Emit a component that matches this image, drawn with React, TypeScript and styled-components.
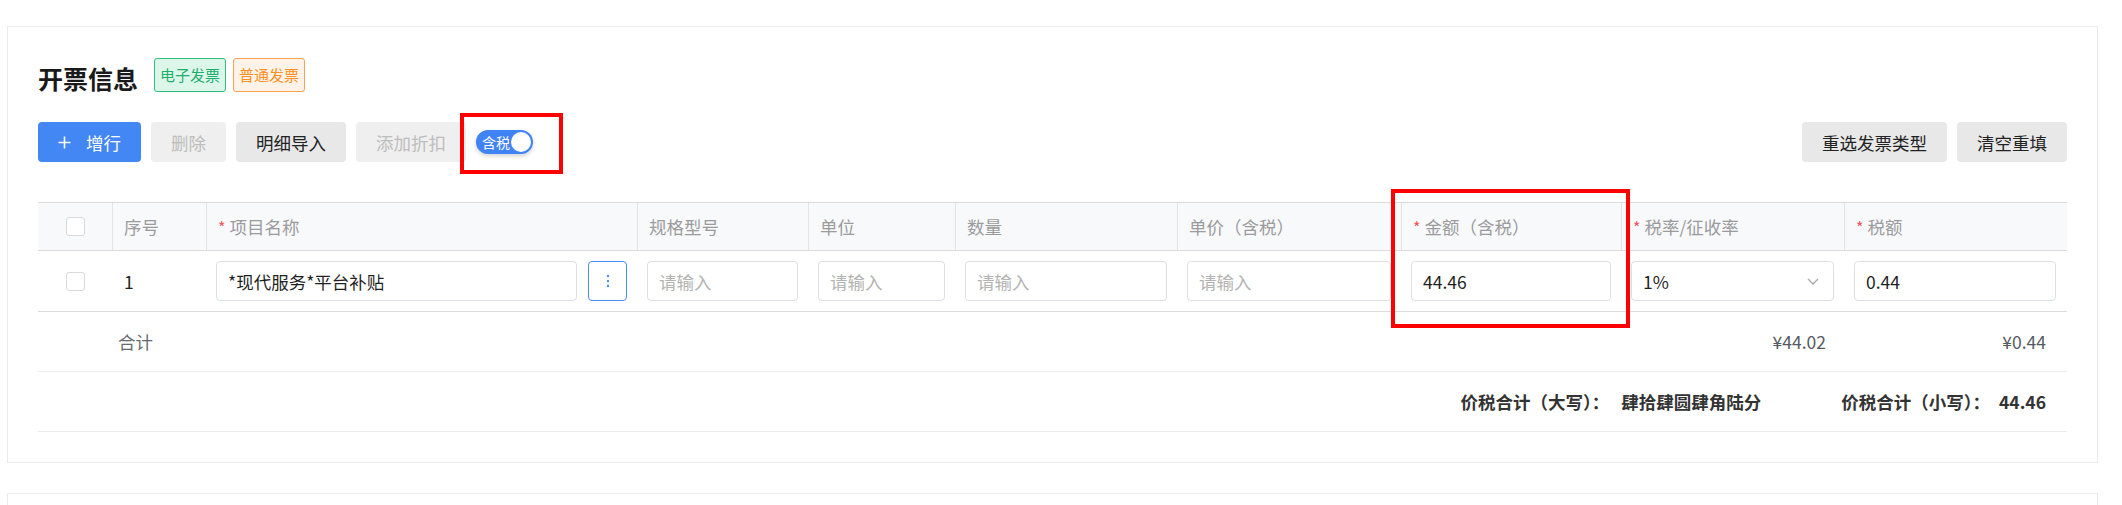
import React, { type FC } from 'react';
import styled, { createGlobalStyle, css } from 'styled-components';

const GlobalStyle = createGlobalStyle`
  * {
    box-sizing: border-box;
  }

  body {
    margin: 0;
    background: #ffffff;
    font-family: 'Noto Sans CJK SC', 'Noto Sans', sans-serif;
    font-size: 17.5px;
    color: #222222;
  }
`;

const COLUMNS = '74px 94px 431px 171px 147px 222px 224px 220px 223px 222px';

const Page = styled.div`
  display: flex;
  flex-direction: column;
  gap: 30px;
  padding: 26px 24px 0 7px;
`;

const Card = styled.section<{ $empty?: boolean }>`
  border: 1px solid #ebebeb;
  background: #ffffff;
  padding: ${({ $empty }) => ($empty ? '0' : '31px 30px 30px')};
  min-height: ${({ $empty }) => ($empty ? '80px' : 'auto')};
`;

const TitleRow = styled.div`
  display: flex;
  align-items: flex-end;
  gap: 16px;
  height: 34px;
`;

const Title = styled.h2`
  margin: 0 0 1px;
  font-size: 25px;
  line-height: 1;
  font-weight: 700;
  color: #1a1a1a;
`;

const TagGroup = styled.div`
  display: flex;
  gap: 7px;
`;

const Tag = styled.span<{ $tone: 'green' | 'orange' }>`
  height: 34px;
  padding: 0 5px;
  border-radius: 3px;
  font-size: 15px;
  line-height: 32px;
  ${({ $tone }) =>
    $tone === 'green'
      ? css`
          border: 1px solid #2dbd7e;
          background: #dcf7ea;
          color: #1cae6a;
        `
      : css`
          border: 1px solid #ffa24d;
          background: #fff3e9;
          color: #ff9124;
        `}
`;

const Toolbar = styled.div`
  display: flex;
  justify-content: space-between;
  align-items: center;
  margin-top: 30px;
`;

const ButtonGroup = styled.div`
  display: flex;
  align-items: center;
  gap: 10px;
`;

const Button = styled.button<{ $variant?: 'primary' | 'default' | 'disabled' }>`
  display: inline-flex;
  align-items: center;
  gap: 15px;
  height: 40px;
  padding: 0 20px;
  border: none;
  border-radius: 4px;
  font-family: inherit;
  font-size: 17.5px;
  cursor: pointer;
  ${({ $variant = 'default' }) => {
    if ($variant === 'primary') {
      return css`
        background: #4387f5;
        color: #ffffff;
      `;
    }
    if ($variant === 'disabled') {
      return css`
        background: #efefef;
        color: #bdbdbd;
        cursor: not-allowed;
      `;
    }
    return css`
      background: #e8e8e8;
      color: #222222;
    `;
  }}
`;

// red annotation frame drawn over the switch
const Marked = styled.span`
  position: relative;
  display: inline-flex;

  &::after {
    content: '';
    position: absolute;
    top: -17px;
    left: -16px;
    right: -30px;
    bottom: -20px;
    border: 4px solid #ff0000;
    pointer-events: none;
  }
`;

const Switch = styled.span`
  display: flex;
  align-items: center;
  justify-content: space-between;
  width: 57px;
  height: 24px;
  padding: 0 2px 0 6px;
  border-radius: 12px;
  background: #3f83f4;
  box-shadow: 0 2px 4px rgba(0, 0, 0, 0.18);
  color: #ffffff;
  font-size: 14px;
  line-height: 24px;
`;

const Knob = styled.span`
  width: 20px;
  height: 20px;
  border-radius: 50%;
  background: #ffffff;
`;

const Table = styled.div`
  margin-top: 40px;
`;

const HeaderRow = styled.div`
  display: grid;
  grid-template-columns: ${COLUMNS};
  height: 49px;
  border-top: 1px solid #dcdcdc;
  border-bottom: 1px solid #dcdcdc;
  background: #f8f9fb;
`;

const HeaderCell = styled.div<{ $first?: boolean; $marked?: boolean }>`
  position: relative;
  display: flex;
  align-items: center;
  justify-content: ${({ $first }) => ($first ? 'center' : 'flex-start')};
  padding: 0 11px;
  border-left: ${({ $first }) => ($first ? 'none' : '1px solid #e3e3e3')};
  color: #9b9b9b;
  white-space: nowrap;

  ${({ $marked }) =>
    $marked &&
    css`
      &::after {
        content: '';
        position: absolute;
        top: -14px;
        left: -11px;
        right: -9px;
        bottom: -78px;
        border: 4px solid #ff0000;
        pointer-events: none;
        z-index: 2;
      }
    `}
`;

const Required = styled.span`
  margin-right: 4px;
  color: #f0545c;
  font-size: 16px;
`;

const BodyRow = styled.div<{ $line?: string; $height: number }>`
  display: grid;
  grid-template-columns: ${COLUMNS};
  height: ${({ $height }) => `${$height}px`};
  border-bottom: 1px solid ${({ $line }) => $line || '#dcdcdc'};
`;

const Cell = styled.div<{ $align?: 'center' | 'right' | 'left'; $pad?: string }>`
  display: flex;
  align-items: center;
  gap: 11px;
  justify-content: ${({ $align }) =>
    $align === 'center' ? 'center' : $align === 'right' ? 'flex-end' : 'flex-start'};
  padding: ${({ $pad }) => $pad || '0 10px'};
  min-width: 0;
`;

const Checkbox = styled.span`
  width: 19px;
  height: 19px;
  border: 1px solid #d9d9d9;
  border-radius: 3px;
  background: #ffffff;
`;

const Input = styled.input`
  flex: 1;
  width: 100%;
  min-width: 0;
  height: 40px;
  padding: 0 11px;
  border: 1px solid #dcdfe4;
  border-radius: 4px;
  outline: none;
  background: #ffffff;
  font-family: inherit;
  font-size: 17.5px;
  color: #1f1f1f;

  &::placeholder {
    color: #b3b3b3;
  }
`;

const MoreButton = styled.button`
  display: flex;
  align-items: center;
  justify-content: center;
  flex: none;
  width: 39px;
  height: 40px;
  padding: 0;
  border: 1px solid #4a8cf6;
  border-radius: 4px;
  background: #ffffff;
  cursor: pointer;
`;

const Select = styled.div`
  display: flex;
  align-items: center;
  justify-content: space-between;
  width: 100%;
  height: 40px;
  padding: 0 14px 0 11px;
  border: 1px solid #dcdfe4;
  border-radius: 4px;
  color: #1f1f1f;
`;

const SumText = styled.span<{ $muted?: boolean }>`
  color: ${({ $muted }) => ($muted ? '#666a70' : '#555a61')};
`;

const TotalsRow = styled.div`
  display: flex;
  justify-content: flex-end;
  align-items: center;
  gap: 80px;
  height: 60px;
  padding-right: 21px;
  border-bottom: 1px solid #ececec;
  font-weight: 700;
  color: #333333;
`;

const TotalGroup = styled.div<{ $gap: number }>`
  display: flex;
  align-items: center;
  gap: ${({ $gap }) => `${$gap}px`};
`;

const PlusIcon: FC = () => (
  <svg width="13" height="13" viewBox="0 0 13 13">
    <path d="M6.5 0.5v12M0.5 6.5h12" stroke="#ffffff" strokeWidth="1.6" />
  </svg>
);

const DotsIcon: FC = () => (
  <svg width="4" height="14" viewBox="0 0 4 14">
    <circle cx="2" cy="2" r="1.2" fill="#4a8cf6" />
    <circle cx="2" cy="7" r="1.2" fill="#4a8cf6" />
    <circle cx="2" cy="12" r="1.2" fill="#4a8cf6" />
  </svg>
);

const ChevronIcon: FC = () => (
  <svg width="12" height="7" viewBox="0 0 12 7">
    <path d="M1 1l5 5 5-5" fill="none" stroke="#a8a8a8" strokeWidth="1.3" />
  </svg>
);

interface Column {
  label: string;
  required?: boolean;
  marked?: boolean;
}

const columns: Column[] = [
  { label: '序号' },
  { label: '项目名称', required: true },
  { label: '规格型号' },
  { label: '单位' },
  { label: '数量' },
  { label: '单价（含税）' },
  { label: '金额（含税）', required: true, marked: true },
  { label: '税率/征收率', required: true },
  { label: '税额', required: true },
];

const App: FC = () => (
  <>
    <GlobalStyle />
    <Page>
      <Card>
        <TitleRow>
          <Title>开票信息</Title>
          <TagGroup>
            <Tag $tone="green">电子发票</Tag>
            <Tag $tone="orange">普通发票</Tag>
          </TagGroup>
        </TitleRow>

        <Toolbar>
          <ButtonGroup>
            <Button $variant="primary">
              <PlusIcon />
              增行
            </Button>
            <Button $variant="disabled">删除</Button>
            <Button>明细导入</Button>
            <Button $variant="disabled">添加折扣</Button>
            <Marked>
              <Switch>
                含税
                <Knob />
              </Switch>
            </Marked>
          </ButtonGroup>
          <ButtonGroup>
            <Button>重选发票类型</Button>
            <Button>清空重填</Button>
          </ButtonGroup>
        </Toolbar>

        <Table>
          <HeaderRow>
            <HeaderCell $first>
              <Checkbox />
            </HeaderCell>
            {columns.map(col => (
              <HeaderCell key={col.label} $marked={col.marked}>
                {col.required && <Required>*</Required>}
                {col.label}
              </HeaderCell>
            ))}
          </HeaderRow>

          <BodyRow $height={61}>
            <Cell $align="center" $pad="0">
              <Checkbox />
            </Cell>
            <Cell $pad="0 12px">1</Cell>
            <Cell>
              <Input defaultValue="*现代服务*平台补贴" />
              <MoreButton>
                <DotsIcon />
              </MoreButton>
            </Cell>
            <Cell>
              <Input placeholder="请输入" />
            </Cell>
            <Cell>
              <Input placeholder="请输入" />
            </Cell>
            <Cell>
              <Input placeholder="请输入" />
            </Cell>
            <Cell>
              <Input placeholder="请输入" />
            </Cell>
            <Cell>
              <Input defaultValue="44.46" />
            </Cell>
            <Cell>
              <Select>
                1%
                <ChevronIcon />
              </Select>
            </Cell>
            <Cell>
              <Input defaultValue="0.44" />
            </Cell>
          </BodyRow>

          <BodyRow $height={60} $line="#ececec">
            <Cell />
            <Cell $pad="0 6px">
              <SumText $muted>合计</SumText>
            </Cell>
            <Cell />
            <Cell />
            <Cell />
            <Cell />
            <Cell />
            <Cell />
            <Cell $align="right" $pad="0 18px">
              <SumText>¥44.02</SumText>
            </Cell>
            <Cell $align="right" $pad="0 20px">
              <SumText>¥0.44</SumText>
            </Cell>
          </BodyRow>

          <TotalsRow>
            <TotalGroup $gap={12}>
              <span>价税合计（大写）：</span>
              <span>肆拾肆圆肆角陆分</span>
            </TotalGroup>
            <TotalGroup $gap={9}>
              <span>价税合计（小写）：</span>
              <span>44.46</span>
            </TotalGroup>
          </TotalsRow>
        </Table>
      </Card>
      <Card $empty />
    </Page>
  </>
);

export default App;
